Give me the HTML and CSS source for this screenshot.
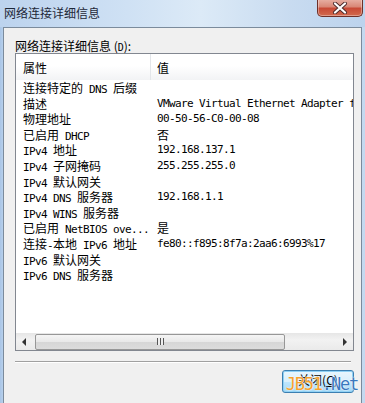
FILE: index.html
```html
<!DOCTYPE html>
<html lang="zh-CN">
<head>
  <meta charset="UTF-8">
  <title>网络连接详细信息</title>
  <link rel="stylesheet" href="styles.css">
</head>
<body>

  <div class="window">
    <div class="titlebar">
      <span class="title">网络连接详细信息</span>
      <div class="close-btn">
        <svg width="20" height="12" viewBox="0 0 20 12">
          <path d="M5 1.5 L15 10.5 M15 1.5 L5 10.5" stroke="#4a2a2a" stroke-width="4" stroke-linecap="round"/>
          <path d="M5 1.5 L15 10.5 M15 1.5 L5 10.5" stroke="#fff" stroke-width="2.2" stroke-linecap="round"/>
        </svg>
      </div>
    </div>

    <div class="client">
      <div class="label">网络连接详细信息 (<u>D</u>):</div>

      <div class="listbox">
        <div class="list-header">
          <div class="col-prop">属性</div>
          <div class="col-val">值</div>
        </div>

        <div class="list-body">
          <div class="row"><div class="col-prop"><span class="zh">连接特定的</span> DNS <span class="zh">后缀</span></div><div class="col-val"></div></div>
          <div class="row"><div class="col-prop"><span class="zh">描述</span></div><div class="col-val">VMware Virtual Ethernet Adapter for VMnet8</div></div>
          <div class="row"><div class="col-prop"><span class="zh">物理地址</span></div><div class="col-val">00-50-56-C0-00-08</div></div>
          <div class="row"><div class="col-prop"><span class="zh">已启用</span> DHCP</div><div class="col-val"><span class="zh">否</span></div></div>
          <div class="row"><div class="col-prop">IPv4 <span class="zh">地址</span></div><div class="col-val">192.168.137.1</div></div>
          <div class="row"><div class="col-prop">IPv4 <span class="zh">子网掩码</span></div><div class="col-val">255.255.255.0</div></div>
          <div class="row"><div class="col-prop">IPv4 <span class="zh">默认网关</span></div><div class="col-val"></div></div>
          <div class="row"><div class="col-prop">IPv4 DNS <span class="zh">服务器</span></div><div class="col-val">192.168.1.1</div></div>
          <div class="row"><div class="col-prop">IPv4 WINS <span class="zh">服务器</span></div><div class="col-val"></div></div>
          <div class="row"><div class="col-prop"><span class="zh">已启用</span> NetBIOS ove...</div><div class="col-val"><span class="zh">是</span></div></div>
          <div class="row"><div class="col-prop"><span class="zh">连接</span>-<span class="zh">本地</span> IPv6 <span class="zh">地址</span></div><div class="col-val">fe80::f895:8f7a:2aa6:6993%17</div></div>
          <div class="row"><div class="col-prop">IPv6 <span class="zh">默认网关</span></div><div class="col-val"></div></div>
          <div class="row"><div class="col-prop">IPv6 DNS <span class="zh">服务器</span></div><div class="col-val"></div></div>
        </div>

        <div class="hscroll">
          <div class="arrow arrow-left"></div>
          <div class="track">
            <div class="thumb"><span class="grip"></span></div>
          </div>
          <div class="arrow arrow-right"></div>
        </div>
      </div>

      <div class="separator"></div>

      <div class="buttons">
        <button class="btn">关闭(<u>C</u>)</button>
        <div class="watermark"><span class="wm-a">JB51</span><span class="wm-b">.Net</span></div>
      </div>
    </div>
  </div>

</body>
</html>
```

FILE: styles.css
```css
body {
  margin: 0;
  width: 365px;
  height: 403px;
  overflow: hidden;
  font-family: "Noto Sans CJK SC", sans-serif;
  font-size: 12px;
  color: #000;
}

.window {
  display: flex;
  flex-direction: column;
  height: 403px;
  background: linear-gradient(to right, #a9c5e6 0px, #b7d0ec 3px, #c9dcf1 40%, #d6e6f6 60%, #c4d9ef 100%);
}

.titlebar {
  height: 27px;
  display: flex;
  align-items: flex-start;
  background: linear-gradient(to right, #bcd3ee 0%, #cfe1f4 35%, #dceaf7 55%, #c8dbf0 80%, #bcd3ed 100%);
}

.title {
  padding: 5px 0 0 4px;
  line-height: 16px;
  color: #1e2838;
}

.close-btn {
  margin-left: auto;
  margin-right: 2px;
  width: 44px;
  height: 17px;
  margin-top: -1px;
  border: 1px solid #6e3028;
  border-top: none;
  border-radius: 0 0 5px 5px;
  background: linear-gradient(#e8b2a6 0%, #d98877 45%, #c84a36 55%, #d16a4e 100%);
  box-shadow: inset 0 0 0 1px rgba(255,255,255,0.35);
  display: flex;
  align-items: center;
  justify-content: center;
}

.client {
  flex: 1;
  margin: 0 3px;
  border: 1px solid #7b8b9c;
  border-bottom: none;
  background: #f0f0f0;
  padding: 0 0 0 11px;
}

.label {
  margin-top: 10px;
  height: 15px;
  line-height: 15px;
}

.label u {
  text-decoration: none;
  font-family: "DejaVu Sans Mono", monospace;
  font-size: 10px;
}

.listbox {
  width: 337px;
  height: 296px;
  border: 1px solid #828790;
  background: #fff;
  display: flex;
  flex-direction: column;
}

.list-header {
  height: 26px;
  display: flex;
  align-items: center;
  background: linear-gradient(#ffffff 0%, #ffffff 45%, #f2f3f5 100%);
}

.list-header .col-prop {
  align-self: stretch;
  display: flex;
  align-items: center;
  border-right: 1px solid #e3e6ea;
}

.col-prop {
  width: 127px;
  padding-left: 7px;
  flex-shrink: 0;
  white-space: nowrap;
  overflow: hidden;
}

.col-val {
  padding-left: 6px;
  white-space: nowrap;
  overflow: hidden;
  flex: 1;
}

.list-body {
  flex: 1;
  overflow: hidden;
}

.row {
  display: flex;
  height: 15.6px;
  line-height: 15.6px;
  font-family: "DejaVu Sans Mono", monospace;
  font-size: 11px;
  letter-spacing: -0.62px;
}

.row .col-prop {
  width: 128px;
}

.zh {
  font-family: "Noto Sans CJK SC", sans-serif;
  font-size: 12px;
  letter-spacing: 0;
}

.hscroll {
  height: 17px;
  display: flex;
  align-items: center;
  background: linear-gradient(#e6e6e6, #f2f2f2 40%, #eaeaea);
}

.arrow {
  width: 17px;
  height: 17px;
  position: relative;
}

.arrow::after {
  content: "";
  position: absolute;
  top: 5px;
  border-top: 4px solid transparent;
  border-bottom: 4px solid transparent;
}

.arrow-left::after {
  left: 6px;
  border-right: 4px solid #333;
}

.arrow-right::after {
  left: 7px;
  border-left: 4px solid #333;
}

.track {
  flex: 1;
  height: 17px;
  display: flex;
  align-items: center;
  padding-left: 2px;
}

.thumb {
  width: 248px;
  height: 14px;
  border: 1px solid #979797;
  border-radius: 2px;
  background: linear-gradient(#f5f5f5 0%, #e8e8e8 50%, #d6d6d6 51%, #dcdcdc 100%);
  display: flex;
  align-items: center;
  justify-content: center;
}

.grip {
  width: 7px;
  height: 7px;
  background: repeating-linear-gradient(to right, #555 0px, #555 1px, #eee 1px, #eee 3px);
}

.separator {
  width: 336px;
  margin-top: 10px;
  border-top: 1px solid #a0a0a0;
  border-bottom: 1px solid #ffffff;
}

.buttons {
  position: relative;
  display: flex;
  justify-content: flex-end;
  width: 339px;
  margin-top: 7px;
}

.btn {
  width: 72px;
  height: 23px;
  border: 1px solid #3c7fb1;
  border-radius: 3px;
  background: linear-gradient(#eaf6fd 0%, #d9f0fc 50%, #bee6fd 51%, #a7d9f5 100%);
  box-shadow: inset 0 0 0 1px #8fd1f5;
  font-family: "Noto Sans CJK SC", sans-serif;
  font-size: 12px;
  color: #000;
  padding: 0 0 4px 0;
}

.btn u {
  text-decoration: underline;
}

.watermark {
  position: absolute;
  right: -4px;
  top: 4px;
  font-family: "DejaVu Sans Mono", monospace;
  font-size: 17px;
  line-height: 20px;
  letter-spacing: -1.2px;
  text-shadow: 0 0 1px #fff, 0 0 2px #fff;
}

.wm-a {
  color: #f5a12d;
}

.wm-b {
  color: #3a78be;
}
```
